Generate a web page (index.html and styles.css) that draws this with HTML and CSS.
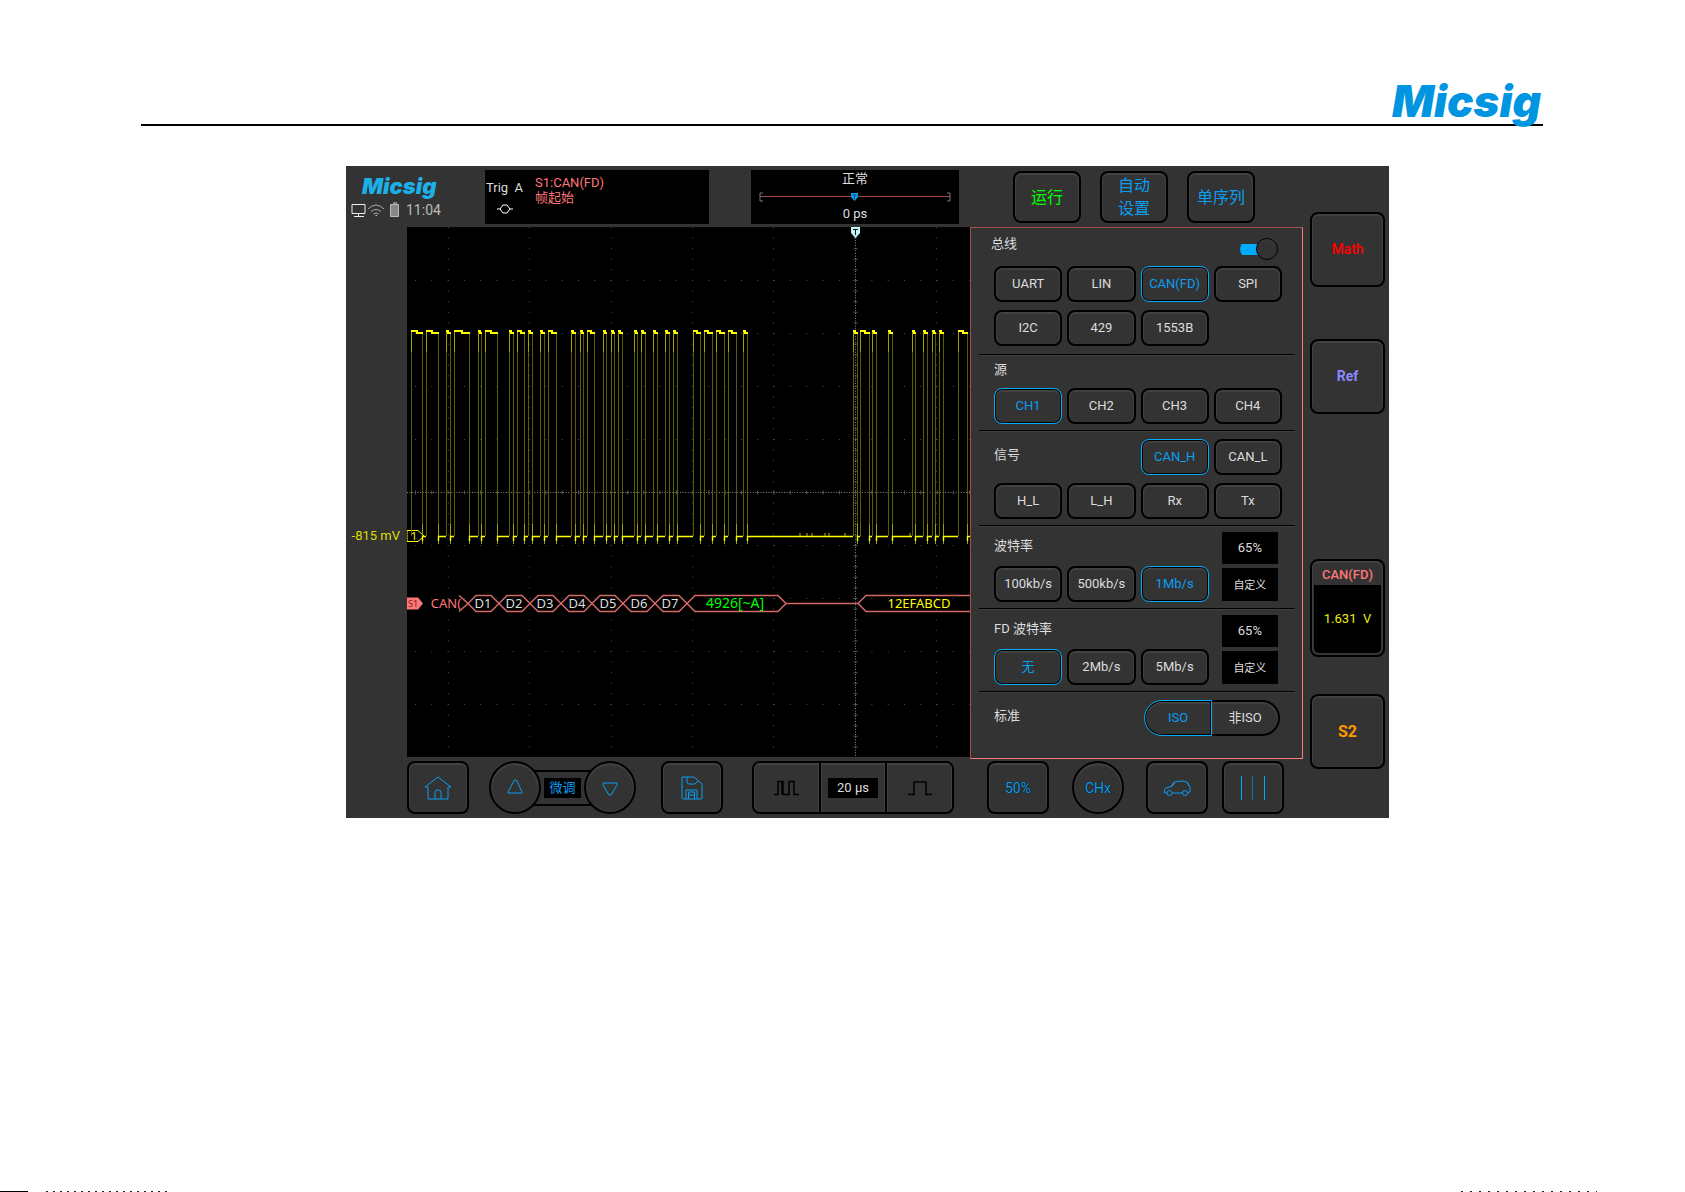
FILE: index.html
```html
<!DOCTYPE html>
<html lang="zh-CN">
<head>
<meta charset="utf-8">
<title>Micsig - CAN(FD)</title>
<link rel="stylesheet" href="styles.css">
</head>
<body>
<header class="page-head"><span class="brand">Micsig</span></header>
<main class="page-body">
<div class="scope">
  <div class="topbar">
    <div class="status">
      <span class="brand brand-small">Micsig</span>
      <div class="status-row">
        <svg width="50" height="18" viewBox="0 0 50 18" fill="none" aria-hidden="true">
          <path d="M1 3.500h13v9H1zM7.500 12.500v3M3 15.500h10" stroke="#eee"/>
          <path d="M17 8q8-8 16 0M20 10.500q5-4 10 0M22.500 13q2.500-2 5 0" stroke="#aaa"/>
          <path d="M24.500 14.500h1.500" stroke="#ccc"/>
          <path d="M39.500 3.500h8v12h-8z" fill="#888" stroke="#bbb"/><path d="M42 2h4" stroke="#ddd"/>
        </svg>
        <span>11:04</span>
      </div>
    </div>
    <div class="trig">
      <div class="trig-mode"><span>Trig &nbsp;A</span>
        <svg width="18" height="12" viewBox="0 0 18 12" fill="none" stroke="#fff" aria-hidden="true"><path d="M1 6h3l3-4h4l3 4h3M4 6l3 4h4l3-4"/></svg>
      </div>
      <div class="trig-source">S1:CAN(FD)<br>帧起始</div>
    </div>
    <div class="timebox">
      <span>正常</span>
      <svg width="192" height="12" viewBox="0 0 192 12" fill="none" aria-hidden="true"><path d="M1 5.500h190" stroke="#a04848"/><path d="M4 2H1v8h3M188 2h3v8h-3" stroke="#778"/><path d="M92 2h7v4l-3.500 4L92 6z" fill="#0a9cf0"/><path d="M93.500 4h4M95.500 4v4" stroke="#056"/></svg>
      <span>0 ps</span>
    </div>
    <div class="runs">
      <button class="key run go">运行</button>
      <button class="key run auto">自动<br>设置</button>
      <button class="key run">单序列</button>
    </div>
  </div>

  <div class="offset">-815 mV</div>

  <div class="screen">
    <svg class="plot" viewBox="0 0 563 530" preserveAspectRatio="xMinYMin slice" fill="none">
      <g id="grid" stroke="#4d4d4d"></g>
      <path d="M0 265.500h563" stroke="#888" stroke-dasharray="1 1.600"/>
      <path d="M448.500 0v530" stroke="#888" stroke-dasharray="1 1.600"/>
      <path d="M0 265.500h563" stroke="#555" stroke-width="4" stroke-dasharray="1 15.300" stroke-dashoffset="-8"/>
      <path d="M448.500 0v530" stroke="#555" stroke-width="4" stroke-dasharray="1 9.600"/>
      <path d="M0 303.500h11l6 5.500-6 5.500H0z" fill="#000" stroke="#ff0"/>
      <path id="edges" stroke="#5c5c00"/>
      <path id="tails" stroke="#a0a000"/>
      <path id="lows" stroke="#ff0" stroke-width="1.400"/>
      <path id="highs" stroke="#ff0" stroke-width="2"/>
      <path d="M393 306v3M400 306v3M405 306v3M418 306v3M422 306v3M438 306v3M503 306v3" stroke="#bb0"/>
      <path d="M444 0h9v6l-4.500 5L444 6z" fill="#c4f4f4"/><path d="M446 2.500h5M448.500 2v6" stroke="#111"/>
      <path d="M52 368.500l9 8-9 8" stroke="#d46868" stroke-width="1.500"/>
      <g id="bus" stroke="#d46868" stroke-width="1.500"></g>
      <path d="M0 370.500h11l5 6-5 6H0z" fill="#f77"/>
      <g class="bus-text" text-anchor="middle">
        <text x="7" y="313" class="mark">1</text>
        <text x="6" y="380" class="tag">S1</text>
        <text x="39" y="381" class="pink">CAN(</text>
        <text x="76" y="381">D1</text><text x="107" y="381">D2</text><text x="138" y="381">D3</text><text x="170" y="381">D4</text><text x="201" y="381">D5</text><text x="232" y="381">D6</text><text x="263" y="381">D7</text>
        <text x="328" y="381" class="green">4926[~A]</text>
        <text x="512" y="381" class="yellow">12EFABCD</text>
      </g>
    </svg>
  </div>

  <div class="panel">
    <section class="group">
      <label class="group-head" for="bus-on"><span class="bus-label">总线</span><input id="bus-on" class="switch" type="checkbox" checked></label>
      <div class="keys">
        <button class="key">UART</button><button class="key">LIN</button><button class="key on">CAN(FD)</button><button class="key">SPI</button>
        <button class="key">I2C</button><button class="key">429</button><button class="key">1553B</button>
      </div>
    </section>
    <section class="group source">
      <div class="group-title">源</div>
      <div class="keys">
        <button class="key on">CH1</button><button class="key">CH2</button><button class="key">CH3</button><button class="key">CH4</button>
      </div>
    </section>
    <section class="group signal">
      <div class="keys">
        <div class="wide">信号</div><button class="key on">CAN_H</button><button class="key">CAN_L</button>
        <button class="key">H_L</button><button class="key">L_H</button><button class="key">Rx</button><button class="key">Tx</button>
      </div>
    </section>
    <section class="group baud">
      <div class="keys">
        <div class="caption">波特率</div>
        <div class="fields"><input aria-label="采样点" value="65%"><button>自定义</button></div>
        <button class="key">100kb/s</button><button class="key">500kb/s</button><button class="key on">1Mb/s</button>
      </div>
    </section>
    <section class="group baud">
      <div class="keys">
        <div class="caption">FD 波特率</div>
        <div class="fields"><input aria-label="FD 采样点" value="65%"><button>自定义</button></div>
        <button class="key on">无</button><button class="key">2Mb/s</button><button class="key">5Mb/s</button>
      </div>
    </section>
    <section class="group standard">
      <span>标准</span>
      <div class="pill"><button class="key on">ISO</button><button class="key">非ISO</button></div>
    </section>
  </div>

  <nav class="rail">
    <button class="key math">Math</button>
    <button class="key ref">Ref</button>
    <button class="key can"><span>CAN(FD)</span><span class="level">1.631 &nbsp;V</span></button>
    <button class="key s2">S2</button>
  </nav>

  <div class="bottombar">
    <button class="key" aria-label="主页"><svg width="30" height="28" viewBox="0 0 30 28" class="line"><path d="M2 13L15 3l13 10h-3v12H5V13zM12 25v-7q0-2 3-2t3 2v7"/></svg></button>
    <div class="fine">
      <button class="key round" aria-label="增加"><svg width="20" height="20" viewBox="0 0 20 20" class="line"><path d="M9.500 2h2L17 14v1H3v-1z"/></svg></button>
      <div class="bridge"><span>微调</span></div>
      <button class="key round" aria-label="减少"><svg width="20" height="20" viewBox="0 0 20 20" class="line"><path d="M3 5h14v2l-6 10H9L3 7z"/></svg></button>
    </div>
    <button class="key save" aria-label="保存"><svg width="26" height="28" viewBox="0 0 26 28" class="line"><path d="M3 3h12l8 7v14q0 1-1 1H4q-1 0-1-1zM8 3v5q0 2 2 2h6l3-3M7 25v-9h11v9M9.500 25v-7h6v7M10 21h5"/></svg></button>
    <div class="timebase">
      <button class="key" aria-label="缩小时基"><svg width="27" height="18" viewBox="0 0 27 18" fill="none" stroke="#000" stroke-width="1.500"><path d="M1 15.500h4V2.500h5v13h6v-13h5v13h5M9 2.500v13M16 2.500v13"/></svg></button>
      <div class="scale"><span>20 µs</span></div>
      <button class="key" aria-label="放大时基"><svg width="26" height="18" viewBox="0 0 26 18" fill="none" stroke="#000" stroke-width="1.500"><path d="M1 15.500h6V3h12v12.500h6"/></svg></button>
    </div>
    <button class="key half">50%</button>
    <button class="key round chx">CHx</button>
    <button class="key car" aria-label="汽车"><svg width="30" height="18" viewBox="0 0 30 18" class="line"><path d="M5 14H2.500q-1-4 1.500-5l5-1.500 3-4.500q8-2 13 0l3 5v5l-2 1M10 14h11M9 8l4-4M25 3l2 4"/><circle cx="7.500" cy="14" r="2.500"/><circle cx="23" cy="14" r="2.500"/></svg></button>
    <button class="key bars" aria-label="光标"><svg width="26" height="24" viewBox="0 0 26 24" fill="none" stroke="#0af"><path d="M1.500 0v24M24.500 0v24"/><path d="M12.500 0v24" stroke="#0878b0"/></svg></button>
  </div>
</div>
</main>
<footer class="page-edge"></footer>
<script src="wave.js"></script>
</body>
</html>
```
FILE: styles.css
```css
* { box-sizing: border-box; }
body {
  margin: 0;
  min-height: 100vh;
  display: flex;
  flex-direction: column;
  background: #fff;
  color: #ddd;
  font: 13px/16px Roboto, "Noto Sans CJK SC", sans-serif;
}
button, input { font: inherit; color: inherit; margin: 0; padding: 0; border: 0; }
svg { display: block; }

.page-head {
  margin: 0 142px 0 141px;
  height: 126px;
  padding-right: 2px;
  border-bottom: 2px solid #000;
  display: flex;
  justify-content: flex-end;
  align-items: flex-end;
}
.brand {
  color: #0095e0;
  font: italic 900 44px/46px Inter, sans-serif;
}
.page-body { padding: 40px 296px 40px 346px; flex: 1; }

.scope {
  background: #333;
  display: grid;
  grid-template-columns: 61px minmax(0, 1fr) 333px 86px;
  grid-template-rows: 61px 530px 61px;
}
.key {
  background: #333;
  border: 2px solid #000;
  border-radius: 8px;
  box-shadow: inset 0 1px 1px 1px #424242;
  display: flex;
  align-items: center;
  justify-content: center;
  white-space: nowrap;
}
.key.on { border-color: #0af; border-width: 1px; color: #0a9ff0; box-shadow: inset 0 0 0 1px #000, inset 0 2px 1px 1px #424242; }
.line { fill: none; stroke: #0a9df0; stroke-width: 1; }

.topbar { grid-column: 1 / 4; display: flex; padding: 4px 0 3px; }
.status { width: 139px; padding: 2px 0 0 5px; }
.brand-small { display: block; font-size: 22px; line-height: 28px; padding-left: 11px; color: #1cb0e8; }
.status-row { display: flex; gap: 5px; align-items: center; height: 20px; font-size: 14px; color: #bbb; }
.trig { width: 224px; background: #000; display: flex; padding: 5px 1px; }
.trig-mode { width: 49px; padding-top: 5px; white-space: nowrap; }
.trig-mode svg { margin: 7px 0 0 10px; }
.trig-source { color: #f77; line-height: 15px; }
.timebox {
  width: 208px; margin-left: 42px; background: #000;
  display: flex; flex-direction: column; align-items: center; justify-content: space-between;
  padding: 1px 0 2px;
}
.runs { flex: 1; display: flex; justify-content: flex-end; gap: 19px; padding: 1px 48px 0 0; }
.run { width: 68px; height: 52px; font-size: 16px; line-height: 23px; color: #0a9ff0; }
.go { color: #0f0; }

.offset { color: #dd0; padding-top: 301px; text-align: right; padding-right: 7px; white-space: nowrap; }
.screen { background: #000; min-width: 0; overflow: hidden; }
.plot { width: 100%; height: 530px; }
.bus-text { font: 13px "Noto Sans", sans-serif; fill: #ddd; }
.bus-text .pink { fill: #f77; }
.bus-text .green { fill: #0f0; font-size: 14px; }
.bus-text .yellow { fill: #ff0; }
.bus-text .mark { fill: #ff0; font: 10px Roboto, sans-serif; }
.bus-text .tag { fill: #722; font-size: 9px; }

.panel { border: 1px solid #a04d4d; border-right-color: #f77; border-bottom-color: #f77; padding: 0 7px 0 8px; height: 532px; }
.group { border-bottom: 1px solid #000; box-shadow: 0 1px #404040; padding: 0 13px 6px 15px; }
.keys { display: grid; grid-template-columns: repeat(4, minmax(0, 1fr)); gap: 8px 5px; }
.keys .key { height: 36px; }
.group-head { height: 38px; display: flex; justify-content: space-between; padding: 8px 4px 0 0; }
.bus-label { margin-left: -3px; }
.switch {
  appearance: none; width: 38px; height: 20px; margin-top: 3px; display: flex; align-items: center;
  background: linear-gradient(#0af, #0af) 0 center / 26px 11px no-repeat; border-radius: 10px;
}
.switch::after { content: ""; width: 20px; height: 20px; margin-left: auto; background: #333; border: 1px solid #000; border-radius: 50%; box-shadow: inset 0 1px #444; }
.group:first-child { padding-bottom: 8px; }
.group-title { height: 33px; padding-top: 7px; }
.signal { padding-top: 8px; }
.wide { grid-column: span 2; padding-top: 8px; }
.baud { padding-top: 6px; }
.baud .keys { row-gap: 4px; }
.caption { grid-column: span 3; height: 30px; padding-top: 6px; }
.fields { grid-column: 4; grid-row: span 2; display: grid; grid-template-rows: 32px 33px; gap: 4px; padding: 0 4px 0 8px; }
.fields input, .fields button { background: #000; width: 100%; text-align: center; border-radius: 0; }
.fields button { font-size: 11px; padding-top: 2px; }
.standard { border: 0; box-shadow: none; padding: 8px 15px 0; display: flex; justify-content: space-between; }
.standard span { padding-top: 8px; }
.pill { display: flex; }
.pill .key { width: 68px; height: 36px; border-radius: 18px 0 0 18px; }
.pill .key + .key { border-radius: 0 18px 18px 0; border-left: 0; }

.rail { grid-column: 4; grid-row: 1 / 4; padding: 46px 4px 0 7px; display: flex; flex-direction: column; }
.rail .key { height: 75px; font-weight: 500; font-size: 14px; padding-bottom: 2px; }
.rail .math { color: #f00; }
.rail .ref { color: #88f; margin-top: 52px; font-weight: 700; }
.rail .can { height: 98px; margin-top: 145px; font-size: 13px; color: #f77; flex-direction: column; padding: 6px 2px 2px; gap: 2px; align-items: stretch; }
.level { flex: 1; background: #000; color: #ee0; font-weight: 400; border-radius: 0 0 5px 5px; display: flex; align-items: center; justify-content: center; }
.rail .s2 { color: #f90; margin-top: 37px; font-size: 16px; font-weight: 700; padding: 0; }

.bottombar { grid-column: 2 / 4; grid-row: 3; display: flex; padding: 4px 19px 4px 0; color: #0a9ff0; }
.bottombar .key { width: 62px; height: 53px; }
.bottombar .round { width: 52px; border-radius: 50%; }
.fine { display: flex; align-items: center; margin-left: 20px; }
.bridge { height: 36px; width: 59px; margin: 0 -8px; border: 2px solid #000; display: flex; align-items: center; justify-content: center; }
.bridge span { background: #000; padding: 2px 5px; }
.round { position: relative; }
.save { margin-left: 25px; }
.timebase { display: flex; width: 202px; margin-left: 29px; border: 2px solid #000; border-radius: 8px; overflow: hidden; }
.timebase .key, .scale { flex: 1; border: 0; height: 49px; border-radius: 0; }
.scale { border: solid #000; border-width: 0 2px; box-shadow: inset 0 1px 1px 1px #424242; display: flex; align-items: center; justify-content: center; color: #ddd; }
.scale span { background: #000; padding: 2px 9px; }
.half, .chx { font-size: 14px; text-shadow: 0 0 1px #000; }
.half { margin-left: auto; }
.chx { margin-left: 23px; }
.car { margin-left: 22px; }
.bars { margin-left: 14px; }

.page-edge {
  height: 1px;
  background: linear-gradient(90deg, #000 28px, transparent 28px),
    repeating-linear-gradient(90deg, #223 0 2px, #fff 2px 7px) 46px 0 / 124px 1px no-repeat,
    repeating-linear-gradient(90deg, #223 0 2px, #fff 2px 9px) right 88px top 0 / 136px 1px no-repeat;
}
```
FILE: wave.js
```js
// CH1 pulses as [rise, fall] in plot units
const pulses = [
  [4, 15], [19, 31], [39, 43], [47, 62], [71, 74], [78, 90], [102, 106], [110, 117],
  [121, 125], [133, 137], [141, 149], [164, 168], [173, 176], [180, 187], [196, 199],
  [204, 207], [211, 215], [227, 230], [234, 238], [246, 250], [258, 262], [266, 270],
  [286, 293], [297, 305], [309, 317], [321, 329], [336, 340], [446, 450], [453, 462],
  [465, 469], [481, 485], [505, 508], [516, 520], [525, 528], [532, 536], [551, 560]
];
let edges = "", tails = "", highs = "", lows = "";
pulses.forEach(([rise, fall], i) => {
  const mid = rise + Math.ceil((fall - rise) / 2);
  const next = pulses[i + 1] ? pulses[i + 1][0] : 563;
  edges += `M${rise + .5} 105V309M${fall + .5} 106V309`;
  tails += `M${rise + .5} 105v20M${fall + .5} 297v20`;
  highs += `M${rise} 104H${mid}V106H${fall + 1}`;
  lows += `M${fall + .5} 314V309.500H${next}`;
});
document.getElementById("edges").setAttribute("d", edges);
document.getElementById("tails").setAttribute("d", tails);
document.getElementById("highs").setAttribute("d", highs);
document.getElementById("lows").setAttribute("d", lows);

// graticule: one dotted line per division
let grid = "";
[41, 122, 204, 285, 366, 529].forEach(x => {
  grid += `<path d="M${x}.5 0V530" stroke-dasharray="1 9.6"/>`;
});
for (let row = 1; row < 10; row++) {
  grid += `<path d="M8 ${row * 53 + .5}H563" stroke-dasharray="1 15.3"/>`;
}
document.getElementById("grid").innerHTML = grid;

// decoded frame cells
const cells = [[61, 92], [92, 123], [123, 154], [154, 185], [185, 216], [216, 248], [248, 280], [280, 379]];
let bus = '<path d="M379 376.500H451M563 368.500H459L451 376.500 459 384.500H563"/>';
cells.forEach(([a, b]) => {
  bus += `<path d="M${a} 376.500l8-8H${b - 8}l8 8-8 8H${a + 8}z"/>`;
});
document.getElementById("bus").innerHTML = bus;
```
